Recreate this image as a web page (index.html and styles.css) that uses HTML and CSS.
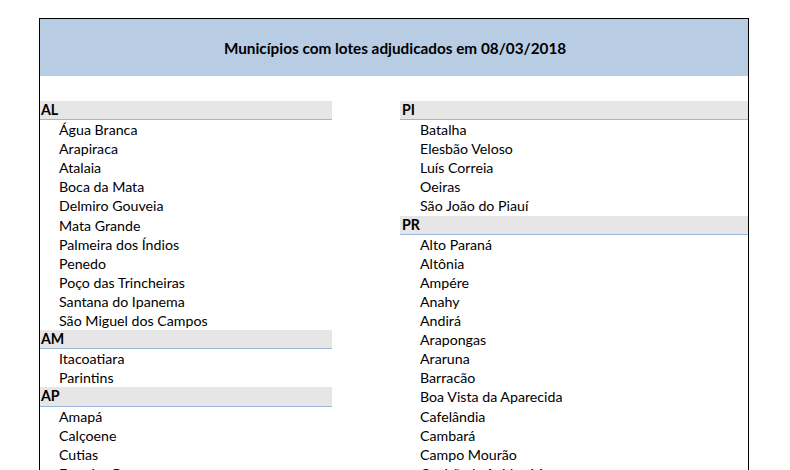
FILE: index.html
```html
<!DOCTYPE html>
<html lang="pt">
<head>
<meta charset="utf-8">
<link rel="stylesheet" href="styles.css">
</head>
<body>
<div class="sheet">
  <div class="title">Municípios com lotes adjudicados em 08/03/2018</div>
  <div class="spacer"></div>
  <div class="cols">
    <div class="col col-left">
      <div class="uf">AL</div>
      <div class="mun">Água Branca</div>
      <div class="mun">Arapiraca</div>
      <div class="mun">Atalaia</div>
      <div class="mun">Boca da Mata</div>
      <div class="mun">Delmiro Gouveia</div>
      <div class="mun">Mata Grande</div>
      <div class="mun">Palmeira dos Índios</div>
      <div class="mun">Penedo</div>
      <div class="mun">Poço das Trincheiras</div>
      <div class="mun">Santana do Ipanema</div>
      <div class="mun">São Miguel dos Campos</div>
      <div class="uf">AM</div>
      <div class="mun">Itacoatiara</div>
      <div class="mun">Parintins</div>
      <div class="uf">AP</div>
      <div class="mun">Amapá</div>
      <div class="mun">Calçoene</div>
      <div class="mun">Cutias</div>
      <div class="mun">Ferreira Gomes</div>
    </div>
    <div class="col col-right">
      <div class="uf">PI</div>
      <div class="mun">Batalha</div>
      <div class="mun">Elesbão Veloso</div>
      <div class="mun">Luís Correia</div>
      <div class="mun">Oeiras</div>
      <div class="mun">São João do Piauí</div>
      <div class="uf">PR</div>
      <div class="mun">Alto Paraná</div>
      <div class="mun">Altônia</div>
      <div class="mun">Ampére</div>
      <div class="mun">Anahy</div>
      <div class="mun">Andirá</div>
      <div class="mun">Arapongas</div>
      <div class="mun">Araruna</div>
      <div class="mun">Barracão</div>
      <div class="mun">Boa Vista da Aparecida</div>
      <div class="mun">Cafelândia</div>
      <div class="mun">Cambará</div>
      <div class="mun">Campo Mourão</div>
      <div class="mun">Capitão Leônidas Marques</div>
    </div>
  </div>
</div>
</body>
</html>
```
FILE: styles.css
```css
html, body {
  margin: 0;
  padding: 0;
  background: #ffffff;
}
body {
  font-family: Lato, "Open Sans", sans-serif;
  color: #000;
  overflow: hidden;
  height: 470px;
}
.sheet {
  margin: 18px 0 0 39px;
  width: 710px;
  box-sizing: border-box;
  border: 1px solid #000;
  border-width: 1px 1.5px 0 1.5px;
  height: 460px;
}
.title {
  height: 57px;
  background: #b8cce4;
  display: flex;
  align-items: center;
  justify-content: center;
  font-weight: bold;
  font-size: 15.3px;
  padding-top: 1px;
  padding-left: 2px;
  box-sizing: border-box;
}
.spacer {
  height: 25px;
}
.cols {
  display: grid;
  grid-template-columns: 292px 1fr;
  column-gap: 68px;
}
.uf, .mun {
  height: 19.1px;
  line-height: 19px;
  font-size: 14.2px;
  box-sizing: border-box;
  white-space: nowrap;
}
.uf {
  background: #e6e6e6;
  border-bottom: 1px solid #9ab6dc;
  font-weight: bold;
  padding-left: 1px;
  line-height: 18px;
}
.mun {
  padding-left: 19px;
}
.col-right .uf {
  padding-left: 2px;
}
.col-right .mun {
  padding-left: 20px;
}
```
